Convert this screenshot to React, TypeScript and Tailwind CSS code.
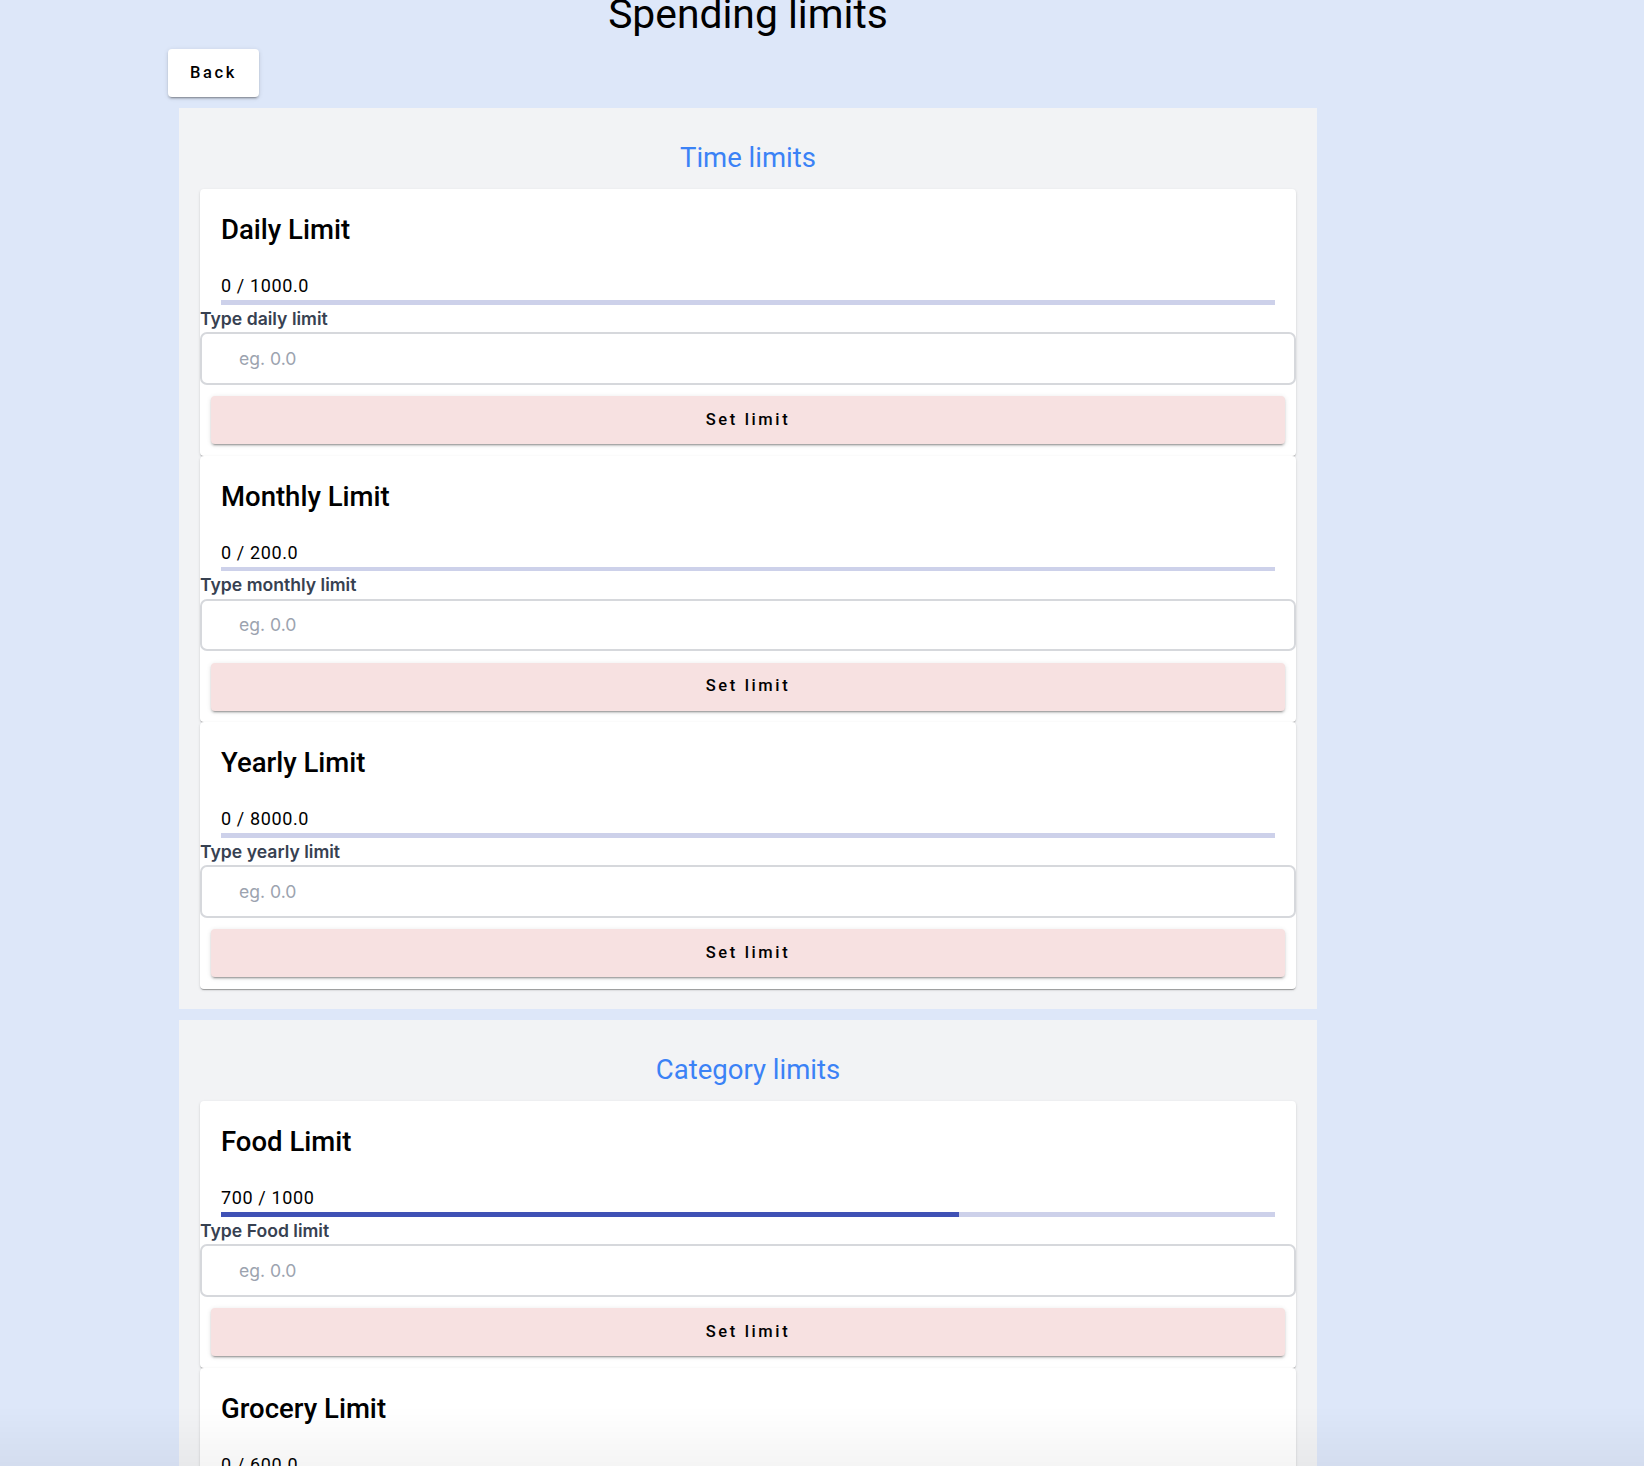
import React from 'react'

const TIME_LIMITS = [
  { title: 'Daily Limit', spent: '0', limit: '1000.0', pct: 0, label: 'Type daily limit' },
  { title: 'Monthly Limit', spent: '0', limit: '200.0', pct: 0, label: 'Type monthly limit' },
  { title: 'Yearly Limit', spent: '0', limit: '8000.0', pct: 0, label: 'Type yearly limit' },
]

const CATEGORY_LIMITS = [
  { title: 'Food Limit', spent: '700', limit: '1000', pct: 70, label: 'Type Food limit' },
  { title: 'Grocery Limit', spent: '0', limit: '600.0', pct: 0, label: 'Type Grocery limit' },
]

type Limit = (typeof TIME_LIMITS)[number]

const roboto = "font-['Roboto','Liberation_Sans',sans-serif]"
const inter = "font-['Inter','Liberation_Sans',sans-serif]"

function LimitCard({ item }: { item: Limit }) {
  return (
    <div className="flex h-[266.5px] flex-col rounded-[4px] bg-white pb-[11.5px] pt-[25px] shadow-[0px_2px_1px_-1px_rgba(0,0,0,0.2),0px_1px_1px_0px_rgba(0,0,0,0.14),0px_1px_3px_0px_rgba(0,0,0,0.12)]">
      <div className="px-[21px]">
        <h3 className={`${roboto} text-[27.5px] font-medium leading-[32px] text-black`}>{item.title}</h3>
        <p className={`${roboto} mt-[28px] text-[18px] leading-[24px] tracking-[0.035em] text-black`}>
          {item.spent} / {item.limit}
        </p>
        {/* progress */}
        <div className="mt-[2px] h-[4.5px] w-full overflow-hidden bg-[#cdd1ea]">
          <div className="h-full bg-[#3f51b5]" style={{ width: `${item.pct}%` }} />
        </div>
      </div>
      <label className={`${inter} mt-[4px] block text-[17.6px] font-semibold leading-[20px] text-[#374151]`}>
        {item.label}
      </label>
      <input
        placeholder="eg. 0.0"
        className={`${inter} mt-[3.5px] h-[52.5px] w-full rounded-[7px] border-2 border-[#d6d8dc] bg-white pl-[37px] text-[17.6px] text-[#374151] placeholder:text-[#9ca3af] focus:outline-none`}
      />
      <button
        className={`${roboto} mx-[11px] mt-[11.5px] h-[48px] rounded-[4px] bg-[#f7e1e1] text-[16.5px] font-medium tracking-[0.16em] text-black shadow-[0px_3px_1px_-2px_rgba(0,0,0,0.2),0px_2px_2px_0px_rgba(0,0,0,0.14),0px_1px_5px_0px_rgba(0,0,0,0.12)]`}
      >
        Set limit
      </button>
    </div>
  )
}

function Section({ heading, items }: { heading: string; items: Limit[] }) {
  return (
    <section className="mx-auto w-[1138px] bg-[#f2f3f5] px-[21px] pb-[20.5px] pt-[34px]">
      <h2 className={`${roboto} text-center text-[27.5px] leading-[32px] text-[#3b82f6]`}>{heading}</h2>
      <div className="mt-[15px] flex flex-col">
        {items.map((item) => (
          <LimitCard key={item.title} item={item} />
        ))}
      </div>
    </section>
  )
}

export default function App() {
  return (
    <div className="relative min-h-screen overflow-hidden bg-[#dde7f9]">
      <div className="w-[1496px]">
        <h1 className={`${roboto} mt-[-8.5px] text-center text-[40.8px] font-normal leading-[44px] text-black`}>
          Spending limits
        </h1>
        <div className="mt-[13.5px] pl-[168px]">
          <button
            className={`${roboto} h-[48px] w-[91px] rounded-[4px] bg-white text-[16.5px] font-medium tracking-[0.16em] text-black shadow-[0px_3px_1px_-2px_rgba(0,0,0,0.2),0px_2px_2px_0px_rgba(0,0,0,0.14),0px_1px_5px_0px_rgba(0,0,0,0.12)]`}
          >
            Back
          </button>
        </div>
        <div className="mt-[11px] flex flex-col gap-[11px]">
          <Section heading="Time limits" items={TIME_LIMITS} />
          <Section heading="Category limits" items={CATEGORY_LIMITS} />
        </div>
      </div>
      {/* bottom fade */}
      <div className="pointer-events-none fixed inset-x-0 bottom-0 h-[60px] bg-gradient-to-b from-transparent to-black/[0.04]" />
    </div>
  )
}
